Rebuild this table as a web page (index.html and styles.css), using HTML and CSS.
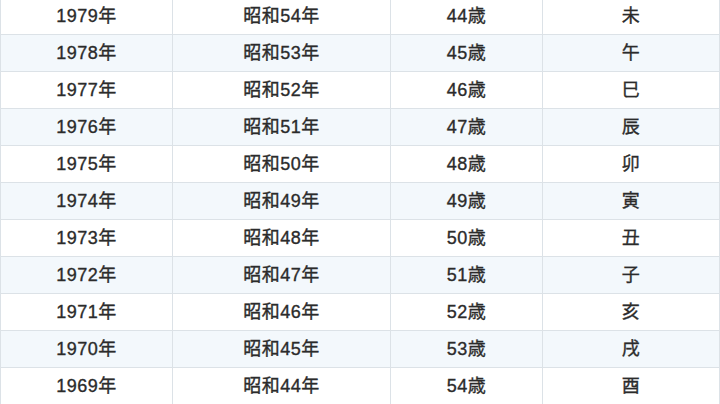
FILE: index.html
```html
<!DOCTYPE html>
<html lang="ja">
<head>
<meta charset="utf-8">
<link rel="stylesheet" href="styles.css">
</head>
<body>
<table class="age-table">
<colgroup>
<col class="c1"><col class="c2"><col class="c3"><col class="c4">
</colgroup>
<tbody>
<tr><td>1979年</td><td>昭和54年</td><td>44歳</td><td>未</td></tr>
<tr><td>1978年</td><td>昭和53年</td><td>45歳</td><td>午</td></tr>
<tr><td>1977年</td><td>昭和52年</td><td>46歳</td><td>巳</td></tr>
<tr><td>1976年</td><td>昭和51年</td><td>47歳</td><td>辰</td></tr>
<tr><td>1975年</td><td>昭和50年</td><td>48歳</td><td>卯</td></tr>
<tr><td>1974年</td><td>昭和49年</td><td>49歳</td><td>寅</td></tr>
<tr><td>1973年</td><td>昭和48年</td><td>50歳</td><td>丑</td></tr>
<tr><td>1972年</td><td>昭和47年</td><td>51歳</td><td>子</td></tr>
<tr><td>1971年</td><td>昭和46年</td><td>52歳</td><td>亥</td></tr>
<tr><td>1970年</td><td>昭和45年</td><td>53歳</td><td>戌</td></tr>
<tr><td>1969年</td><td>昭和44年</td><td>54歳</td><td>酉</td></tr>
</tbody>
</table>
</body>
</html>
```
FILE: styles.css
```css
html, body {
  margin: 0;
  padding: 0;
  background: #ffffff;
}
.age-table {
  border-collapse: collapse;
  table-layout: fixed;
  width: 719px;
  margin-top: -3px;
  font-family: "Liberation Sans", "Noto Sans CJK JP", sans-serif;
  font-size: 18px;
  letter-spacing: 0.5px;
  color: #2b2b2b;
  -webkit-text-stroke: 0.35px #2b2b2b;
}
.c1 { width: 172px; }
.c2 { width: 218px; }
.c3 { width: 152px; }
.c4 { width: 177px; }
.age-table td {
  height: 36px;
  padding: 0;
  text-align: center;
  vertical-align: middle;
  border: 1px solid #dce2e7;
  line-height: 20px;
}
.age-table tr:nth-child(even) td {
  background: #f3f8fc;
}
```
